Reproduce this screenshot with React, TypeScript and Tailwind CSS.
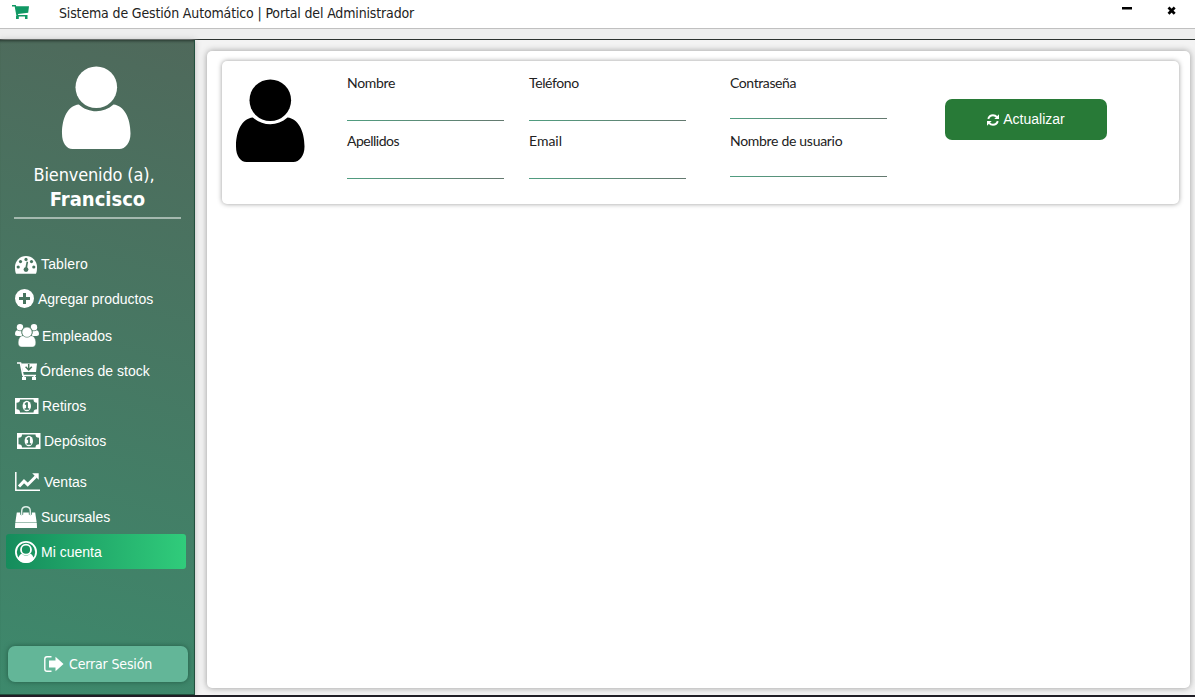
import React from "react";

const tahoma = "font-['DejaVu_Sans_Condensed','DejaVu_Sans',sans-serif] [font-stretch:condensed]";

function User({ className }: { className: string }) {
  return (
    <svg width="70" height="84" viewBox="0 0 70 84" className={className} fill="currentColor">
      <circle cx="35.300" cy="21.200" r="20.800" />
      <path d="M17.800 38.500C7 39.500 1 52 1 67.500 1 77 5.500 83 11.500 83H58.300c6 0 11.200-6 11.200-15.500C69.500 52 63 39.500 52.500 38.500C47.500 43 41.500 45.300 35.300 45.300S22.800 43 17.800 38.500Z" />
    </svg>
  );
}

const Dashboard = () => (
  <svg width="22" height="18" viewBox="0 0 22 18" className="mt-[2px]">
    <path fill="#fff" d="M11 0A11 11 0 0 0 0 11c0 2.400.2 4.600.8 6.200q.3.600.9.600h18.600q.6 0 .9-.6C21.800 15.600 22 13.400 22 11A11 11 0 0 0 11 0Z" />
    <g fill="#47745f">
      <circle cx="11" cy="3.400" r="1.600" /><circle cx="5.500" cy="5.600" r="1.600" /><circle cx="16.500" cy="5.600" r="1.600" />
      <circle cx="3.200" cy="11" r="1.600" /><circle cx="18.800" cy="11" r="1.600" />
      <circle cx="11" cy="13.600" r="2.400" /><path d="m11.600 5.600 1.500.3-1.200 7-1.700-.3Z" />
    </g>
  </svg>
);
const Plus = () => (
  <svg width="19" height="19" viewBox="0 0 19 19">
    <circle cx="9.500" cy="9.500" r="9.500" fill="#fff" />
    <path d="M8 4h3v4h4v3h-4v4H8v-4H4V8h4Z" fill="#47755f" />
  </svg>
);
const People = () => (
  <svg width="24" height="23" viewBox="0 0 24 23" fill="#fff">
    <circle cx="5" cy="3.200" r="3.200" /><circle cx="19" cy="3.200" r="3.200" />
    <path d="M2.200 6.200Q5 8 7 6.600V12H2.400Q0 12 0 10.300 0 6.800 2.200 6.200Zm19.600 0Q19 8 17 6.600V12h4.600q2.400 0 2.400-1.700 0-3.500-2.200-4.100Z" />
    <circle cx="12" cy="8" r="5.700" fill="#47775f" />
    <path d="M7.700 11.700C4.500 12 3.200 15.500 3.200 19c0 2.500 1.400 4 3.500 4h10.600c2.100 0 3.500-1.500 3.500-4 0-3.500-1.300-7-4.500-7.300Z" stroke="#47775f" strokeWidth=".4" />
    <circle cx="12" cy="8.200" r="5.100" stroke="#47775f" strokeWidth=".6" />
  </svg>
);
const StockCart = () => (
  <svg width="21" height="18" viewBox="0 0 21 18" fill="none">
    <path d="M0 1h3.500L6 13.500h13" stroke="#fff" strokeWidth="1.700" />
    <path d="M4 1.500H20L19 10H6Z" fill="#fff" />
    <path d="M11.700 2V8m-3.100-3.200 3.100 3.200 3.100-3.200" stroke="#47795f" strokeWidth="1.500" />
    <path d="M5 15h4v3H5Zm10 0h4v3h-4Z M6 13h1.500v3H6Zm10.500 0H18v3h-1.500Z" fill="#fff" />
  </svg>
);
const Money = () => (
  <svg width="24" height="16" viewBox="0 0 24 16">
    <path fill="#fff" fillRule="evenodd" d="M0 0h23.500v16H0ZM5 1.600Q5 4.800 1.500 4.800v6.400Q5 11.200 5 14.400h13.500q0-3.200 3.500-3.200V4.800Q18.500 4.800 18.500 1.600Z" />
    <ellipse cx="11.800" cy="8" rx="4.200" ry="5.200" fill="#fff" />
    <path d="m9.500 6 1.700-1.700h1.700v6h1.300v1.400H9.600v-1.400h1.500V6.500l-.8.600Z" fill="#437b65" />
  </svg>
);
const Chart = () => (
  <svg width="25" height="19" viewBox="0 0 25 19" fill="none" stroke="#fff">
    <path d="M.8 0v18.200H25" strokeWidth="1.500" />
    <path d="m4 14.500 5-5.300 3.700 3.500 8.200-8.200" strokeWidth="3" />
    <path d="M17.200 1.200h6.500v6.500Z" fill="#fff" stroke="none" />
  </svg>
);
const Bag = () => (
  <svg width="22" height="22" viewBox="0 0 22 22">
    <path d="M6.700 9V5.200C6.700 2.300 8.500.7 11 .7s4.300 1.600 4.300 4.500V9" fill="none" stroke="#e1eee9" strokeWidth="1.400" />
    <path d="M1.800 6.500h3.400v2q1.500 1.600 3 0v-2h5.600v2q1.500 1.600 3 0v-2h3.400l1.500 10H.300Z" fill="#fff" />
    <path d="M.2 17h21.600L22 22H0Z" fill="#fff" />
  </svg>
);
const Account = () => (
  <svg width="22" height="22" viewBox="0 0 22 22">
    <circle cx="11" cy="11" r="10.100" fill="none" stroke="#fff" strokeWidth="1.800" />
    <path fill="#fff" d="M3 18.500Q4 13.300 7 12.700q1.600 2 4 2t4-2q3 .6 4 5.800Q15.500 22 11 22t-8-3.500Z" />
    <circle cx="11" cy="8.700" r="5" fill="none" stroke="#fff" strokeWidth="1.800" />
  </svg>
);

const nav = [
  { label: "Tablero", icon: <Dashboard />, row: "pl-[9px] gap-[4px]", text: "tracking-[0.15px]" },
  { label: "Agregar productos", icon: <Plus />, row: "pl-[9px] gap-[4px]", text: "" },
  { label: "Empleados", icon: <People />, row: "pl-[9px] gap-[3px] mt-[2px]", text: "" },
  { label: "Órdenes de stock", icon: <StockCart />, row: "pl-[11px] gap-[2px]", text: "" },
  { label: "Retiros", icon: <Money />, row: "pl-[9px] gap-[3px]", text: "" },
  { label: "Depósitos", icon: <Money />, row: "pl-[11px] gap-[3px]", text: "" },
  { label: "Ventas", icon: <Chart />, row: "pl-[9px] gap-[4px] mt-[6px]", text: "" },
  { label: "Sucursales", icon: <Bag />, row: "pl-[9px] gap-[4px]", text: "" },
  { label: "Mi cuenta", icon: <Account />, row: "pl-[9px] gap-[4px] rounded-[3px] bg-linear-to-r from-[#158c5c] to-[#30cc7b]", text: "" },
];

function Field({ label, tall, spacing }: { label: string; tall: boolean; spacing: string }) {
  return (
    <label className="block h-[58px] w-[157px]">
      <span className={`block h-5 whitespace-nowrap font-[Lato,sans-serif] text-[14px] leading-5 text-[#222] ${spacing}`}>{label}</span>
      <span className={`block ${tall ? "h-[27px]" : "h-[25px]"}`} />
      <span className="block h-px bg-linear-to-r from-[#4f9d80] to-[#64796f]" />
    </label>
  );
}

export default function App() {
  return (
    <div className="flex h-[697px] w-[1195px] flex-col overflow-hidden bg-[#f3f3f3]">
      <header className="flex h-[29px] shrink-0 items-start border-b border-[#c0c0c0] bg-white">
        <svg width="18" height="15" viewBox="0 0 18 15" className="mt-[5px] ml-[12px] shrink-0" fill="#109864">
          <path d="M0 0h3.800l.4 1.200H17L16.200 7.800 6 9l.2 1H15.500V11.500H4.500L2.700 1.500H0ZM4 11H6.800V14H4Zm9 0h2.500V14H13Z" />
        </svg>
        <h1 className={`ml-[29px] mt-[3px] grow text-[14px] leading-5 tracking-[-0.150px] text-[#222] whitespace-nowrap ${tahoma}`}>Sistema de Gestión Automático | Portal del Administrador</h1>
        <svg width="56" height="10" viewBox="0 0 56 10" className="mt-[6px] mr-[17px] shrink-0">
          <path d="M0 1h10v2.500H0Z" />
          <path d="m46.500 1.500 6.200 6.200m0-6.200-6.200 6.200" stroke="#000" strokeWidth="2.700" />
        </svg>
      </header>
      <div className="h-[11px] shrink-0 border-b border-[#2c322f] bg-[#eee]" />
      <div className="flex h-[655px] shrink-0">
        <aside className="flex w-[195px] shrink-0 flex-col border-r border-b border-[#23503e] bg-[linear-gradient(195deg,#4f695b_0%,#3d896c_100%)] shadow-[inset_0_3px_3px_-2px_#27382f,0_0_6px_#bbb]">
          <User className="mt-[26px] ml-[61px] shrink-0 text-white" />
          <div className={`mt-[13px] w-[188px] text-center text-[18px] leading-6 tracking-[-0.150px] text-white ${tahoma}`}>Bienvenido (a),</div>
          <div className={`w-[195px] text-center text-[20px] leading-6 font-bold text-white ${tahoma}`}>Francisco</div>
          <div className="mt-[6px] ml-[14px] h-[2px] w-[167px] shrink-0 bg-[#a4b9af]" />
          <nav className="mt-[27px] ml-[6px] w-[180px] font-['Liberation_Sans',Arial,sans-serif] text-[14px] text-white">
            {nav.map((n) => (
              <a key={n.label} className={`flex h-[35px] items-center whitespace-nowrap ${n.row}`}>
                <span className="shrink-0">{n.icon}</span>
                <span className={`pt-px ${n.text}`}>{n.label}</span>
              </a>
            ))}
          </nav>
          <button className={`mt-[77px] ml-[8px] flex h-[36px] w-[180px] shrink-0 items-center rounded-[7px] bg-[#63b698] pl-[36px] text-[14px] tracking-[-0.150px] text-white shadow-[0_0_5px_#245b46] ${tahoma}`}>
            <svg width="20" height="16" viewBox="0 0 20 16" className="mr-[5px] shrink-0">
              <path d="M7.500.8H3Q.8.800.8 3v10q0 2.200 2.200 2.200h4.500" fill="none" stroke="#fff" strokeWidth="1.400" />
              <path d="M5 4.500h6.500V.7L19.500 8l-8 7.300V11.500H5Z" fill="#fff" />
            </svg>
            Cerrar Sesión
          </button>
        </aside>
        <main className="mt-[11px] ml-[12px] h-[637px] w-[983px] rounded-[5px] bg-white pt-[10px] pl-[15px] shadow-[0_0_6px_#999]">
          <section className="flex h-[143px] w-[957px] rounded-[5px] bg-white shadow-[0_0_5px_#999]">
            <User className="mt-[18px] ml-[13px] shrink-0 text-black" />
            <div className="mt-[12px] ml-[42px]">
              <Field label="Nombre" tall spacing="tracking-[-0.3px]" />
              <Field label="Apellidos" tall spacing="tracking-[-0.5px]" />
            </div>
            <div className="mt-[12px] ml-[25px]">
              <Field label="Teléfono" tall spacing="tracking-[-0.4px]" />
              <Field label="Email" tall spacing="tracking-[0px]" />
            </div>
            <div className="mt-[12px] ml-[44px]">
              <Field label="Contraseña" tall={false} spacing="tracking-[-0.4px]" />
              <Field label="Nombre de usuario" tall={false} spacing="tracking-[-0.3px]" />
            </div>
            <button className="mt-[38px] ml-[58px] flex h-[41px] w-[162px] items-center justify-center gap-[4px] rounded-[7px] bg-[#287a37] font-['Liberation_Sans',Arial,sans-serif] text-[14px] text-white">
              <svg width="12" height="12" viewBox="0 0 12 12" fill="none" stroke="#fff" strokeWidth="1.900">
                <path d="M1.200 4.900C2 2.500 3.600 1.200 6 1.200q2.300 0 4 2M10.800 7.100C10 9.500 8.400 10.800 6 10.800q-2.300 0-4-2" />
                <path d="M12 .3V5H7.300ZM0 11.700V7h4.700Z" fill="#fff" stroke="none" />
              </svg>
              Actualizar
            </button>
          </section>
        </main>
      </div>
      <div className="h-[2px] shrink-0 bg-[#1f1e25]" />
    </div>
  );
}
